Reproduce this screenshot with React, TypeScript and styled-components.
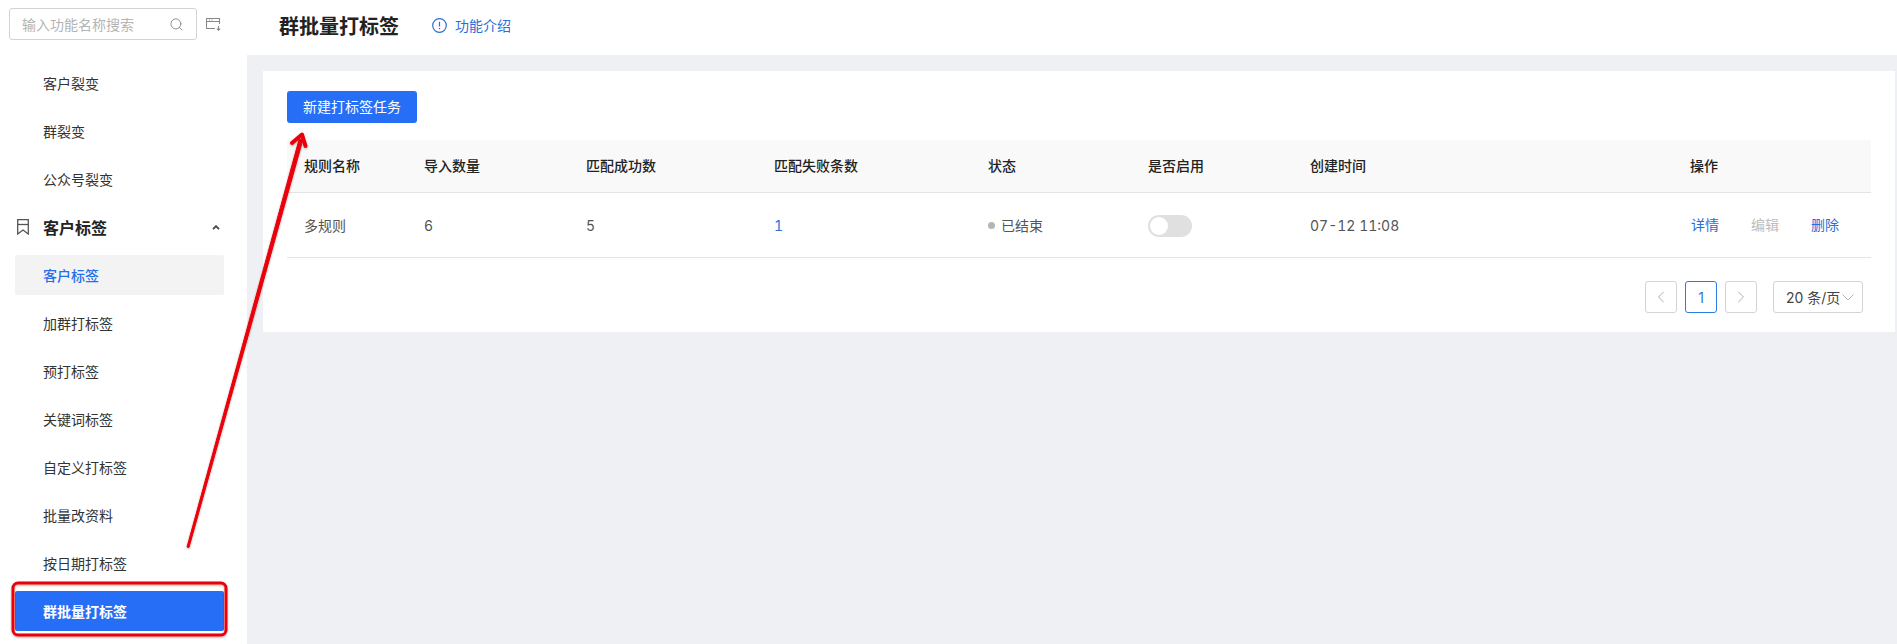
import styled, { createGlobalStyle } from "styled-components";
import { ChevronLeft, ChevronRight, Search } from "lucide-react";

const GlobalStyle = createGlobalStyle`
  html, body {
    margin: 0;
    padding: 0;
    height: 100%;
    overflow: hidden;
  }
  body {
    font-family: Inter, "Noto Sans CJK SC", sans-serif;
    font-size: 14px;
    color: #333;
  }
`;

const Page = styled.div`
  position: relative;
  display: flex;
  width: 1897px;
  height: 644px;
  background: #eff0f4;
  overflow: hidden;
`;

const Sidebar = styled.aside`
  width: 247px;
  flex: none;
  background: #fff;
  display: flex;
  flex-direction: column;
  padding: 8px 0 0;
  box-sizing: border-box;
`;

const SearchRow = styled.div`
  display: flex;
  align-items: center;
  padding-left: 9px;
  gap: 9px;
  margin-bottom: 23px;
`;

const SearchBox = styled.div`
  width: 188px;
  height: 32px;
  box-sizing: border-box;
  border: 1px solid #d3d3d3;
  border-radius: 3px;
  display: flex;
  align-items: center;
  justify-content: space-between;
  padding: 0 12px 0 12px;
  color: #b4b4b4;
  font-size: 14px;
  svg {
    color: #777;
  }
`;

const Menu = styled.nav`
  display: flex;
  flex-direction: column;
  gap: 8px;
`;

const MenuItem = styled.div<{ $state?: "current" | "selected" }>`
  height: 40px;
  width: 209px;
  margin-left: 15px;
  box-sizing: border-box;
  padding-left: 28px;
  display: flex;
  align-items: center;
  border-radius: 2px;
  font-size: 14px;
  color: ${(p) => (p.$state === "selected" ? "#fff" : p.$state === "current" ? "#266eec" : "#333")};
  font-weight: ${(p) => (p.$state === "selected" ? 600 : p.$state === "current" ? 500 : 400)};
  background: ${(p) => (p.$state === "selected" ? "#266ef5" : p.$state === "current" ? "#f3f3f3" : "transparent")};
`;

const MenuGroup = styled.div`
  height: 40px;
  display: flex;
  align-items: center;
  font-size: 16px;
  font-weight: 600;
  color: #222;
  padding: 0 27px 0 17px;
  span {
    margin-left: 14px;
    flex: 1;
  }
`;

const Main = styled.main`
  flex: 1;
  display: flex;
  flex-direction: column;
  min-width: 0;
  margin-left: -1px;
`;

const Header = styled.header`
  height: 55px;
  background: #fff;
  display: flex;
  align-items: center;
  padding: 0 0 5px 33px;
  box-sizing: border-box;
`;

const Title = styled.h1`
  margin: 0;
  font-size: 20px;
  font-weight: 600;
  color: #222;
`;

const Intro = styled.a`
  margin-left: 33px;
  display: flex;
  align-items: center;
  gap: 8px;
  font-size: 14px;
  color: #2c6ed8;
`;

const Card = styled.section`
  margin: 16px 2px 0 17px;
  height: 261px;
  background: #fff;
  padding: 20px 24px 0;
  box-sizing: border-box;
`;

const PrimaryButton = styled.button`
  display: block;
  width: 130px;
  height: 32px;
  border: none;
  border-radius: 3px;
  background: #266ef5;
  color: #fff;
  font: inherit;
  font-size: 14px;
  padding: 0 0 2px;
`;

const Row = styled.div<{ $head?: boolean }>`
  display: grid;
  grid-template-columns: 120px 162px 188px 214px 160px 162px 380px 198px;
  align-items: center;
  height: ${(p) => (p.$head ? "53px" : "65px")};
  margin-top: ${(p) => (p.$head ? "17px" : "0")};
  padding-bottom: ${(p) => (p.$head ? "2px" : "0")};
  background: ${(p) => (p.$head ? "#f9f9f9" : "#fff")};
  border-bottom: 1px solid #e4e4e4;
  box-sizing: border-box;
  color: ${(p) => (p.$head ? "#222" : "#555")};
  font-weight: ${(p) => (p.$head ? 500 : 400)};
  font-size: 14px;
  font-variant-numeric: tabular-nums;
`;

const Cell = styled.div`
  padding-left: 17px;
  display: flex;
  align-items: center;
`;

const NumberLink = styled.span`
  color: #2c6ed8;
`;

const Dot = styled.i`
  width: 7px;
  height: 7px;
  border-radius: 50%;
  background: #b5b5b5;
  margin-right: 6px;
`;

const Toggle = styled.span`
  position: relative;
  top: 1px;
  width: 44px;
  height: 22px;
  border-radius: 11px;
  background: #e0e0e0;
  &::after {
    content: "";
    position: absolute;
    left: 2px;
    top: 2px;
    width: 18px;
    height: 18px;
    border-radius: 50%;
    background: #fff;
  }
`;

const Actions = styled.div`
  display: flex;
  gap: 32px;
  padding: 0 0 2px 18px;
`;

const Action = styled.span<{ $off?: boolean }>`
  color: ${(p) => (p.$off ? "#bdbdbd" : "#2c6ed8")};
`;

const Pager = styled.div`
  display: flex;
  justify-content: flex-end;
  align-items: center;
  gap: 8px;
  margin-top: 23px;
  padding-right: 8px;
`;

const PageButton = styled.div<{ $active?: boolean }>`
  width: 32px;
  height: 32px;
  box-sizing: border-box;
  border: 1px solid ${(p) => (p.$active ? "#2c7be0" : "#d4d4d4")};
  border-radius: 3px;
  display: flex;
  align-items: center;
  justify-content: center;
  color: ${(p) => (p.$active ? "#2c7be0" : "#b0b0b0")};
  font-size: 14px;
`;

const PageSize = styled.div`
  width: 90px;
  height: 32px;
  margin-left: 8px;
  box-sizing: border-box;
  border: 1px solid #d4d4d4;
  border-radius: 3px;
  display: flex;
  align-items: center;
  gap: 2px;
  padding-left: 12px;
  color: #444;
  font-size: 14px;
  white-space: nowrap;
`;

const Overlay = styled.svg`
  position: absolute;
  left: 0;
  top: 0;
  pointer-events: none;
`;

const InfoIcon = () => (
  <svg width="15" height="15" viewBox="0 0 15 15" fill="none" stroke="#2c6ed8" strokeWidth="1.2">
    <circle cx="7.5" cy="7.5" r="6.8" />
    <path d="M7.5 3.8v4.6M7.5 10v1.2" />
  </svg>
);

const FoldIcon = () => (
  <svg width="16" height="16" viewBox="0 0 16 16" fill="none" stroke="#888" strokeWidth="1.1">
    <path d="M13.5 8V2.5h-13v10H9" />
    <path d="M.5 5.5h13M3 4h1M5.5 4h1" />
    <path d="M12.5 10v4M10.8 12.6l1.7 1.7 1.7-1.7" />
  </svg>
);

const TagGroupIcon = () => (
  <svg width="12" height="16" viewBox="0 0 12 16" fill="none" stroke="#555" strokeWidth="1.3">
    <path d="M.7 15V.7h10.6V15L6 11z" />
    <path d="M.7 5.5h10.6" />
  </svg>
);

const FoldUpIcon = () => (
  <svg width="8" height="5" viewBox="0 0 8 5" fill="none" stroke="#444" strokeWidth="1.8">
    <path d="M1 4.2L4 1.2l3 3" />
  </svg>
);

const SelectArrow = () => (
  <svg width="12" height="7" viewBox="0 0 12 7" fill="none" stroke="#b8b8b8" strokeWidth="1">
    <path d="M.5.5L6 6l5.5-5.5" />
  </svg>
);

const plainItems = ["加群打标签", "预打标签", "关键词标签", "自定义打标签", "批量改资料", "按日期打标签"];

export default function App() {
  return (
    <Page>
      <GlobalStyle />
      <Sidebar>
        <SearchRow>
          <SearchBox>
            输入功能名称搜索
            <Search size={15} strokeWidth={1.3} />
          </SearchBox>
          <FoldIcon />
        </SearchRow>
        <Menu>
          <MenuItem>客户裂变</MenuItem>
          <MenuItem>群裂变</MenuItem>
          <MenuItem>公众号裂变</MenuItem>
          <MenuGroup>
            <TagGroupIcon />
            <span>客户标签</span>
            <FoldUpIcon />
          </MenuGroup>
          <MenuItem $state="current">客户标签</MenuItem>
          {plainItems.map((item) => (
            <MenuItem key={item}>{item}</MenuItem>
          ))}
          <MenuItem $state="selected">群批量打标签</MenuItem>
        </Menu>
      </Sidebar>
      <Main>
        <Header>
          <Title>群批量打标签</Title>
          <Intro>
            <InfoIcon />
            功能介绍
          </Intro>
        </Header>
        <Card>
          <PrimaryButton>新建打标签任务</PrimaryButton>
          <Row $head>
            <Cell>规则名称</Cell>
            <Cell>导入数量</Cell>
            <Cell>匹配成功数</Cell>
            <Cell>匹配失败条数</Cell>
            <Cell>状态</Cell>
            <Cell>是否启用</Cell>
            <Cell>创建时间</Cell>
            <Cell>操作</Cell>
          </Row>
          <Row>
            <Cell>多规则</Cell>
            <Cell>6</Cell>
            <Cell>5</Cell>
            <Cell>
              <NumberLink>1</NumberLink>
            </Cell>
            <Cell>
              <Dot />
              已结束
            </Cell>
            <Cell>
              <Toggle />
            </Cell>
            <Cell>07-12 11:08</Cell>
            <Actions>
              <Action>详情</Action>
              <Action $off>编辑</Action>
              <Action>删除</Action>
            </Actions>
          </Row>
          <Pager>
            <PageButton>
              <ChevronLeft size={20} strokeWidth={1.2} />
            </PageButton>
            <PageButton $active>1</PageButton>
            <PageButton>
              <ChevronRight size={20} strokeWidth={1.2} />
            </PageButton>
            <PageSize>
              20 条/页
              <SelectArrow />
            </PageSize>
          </Pager>
        </Card>
      </Main>
      <Overlay width="1897" height="644" viewBox="0 0 1897 644" fill="none">
        <defs>
          <filter id="soft" x="-20%" y="-20%" width="140%" height="140%">
            <feDropShadow dx="0" dy="1" stdDeviation="1" floodColor="#000" floodOpacity="0.3" />
          </filter>
        </defs>
        <g filter="url(#soft)">
          <path d="M187 547L189 547.500L302.800 140L299.200 139Z" fill="#ea0008" stroke="#ea0008" strokeWidth="1" strokeLinejoin="round" />
          <path
            d="M292 143L302 134.500L305.500 146"
            stroke="#ea0008"
            strokeWidth="4"
            strokeLinecap="round"
            strokeLinejoin="round"
          />
          <rect x="13" y="583" width="213" height="52" rx="5" stroke="#ea0008" strokeWidth="3" />
        </g>
      </Overlay>
    </Page>
  );
}
